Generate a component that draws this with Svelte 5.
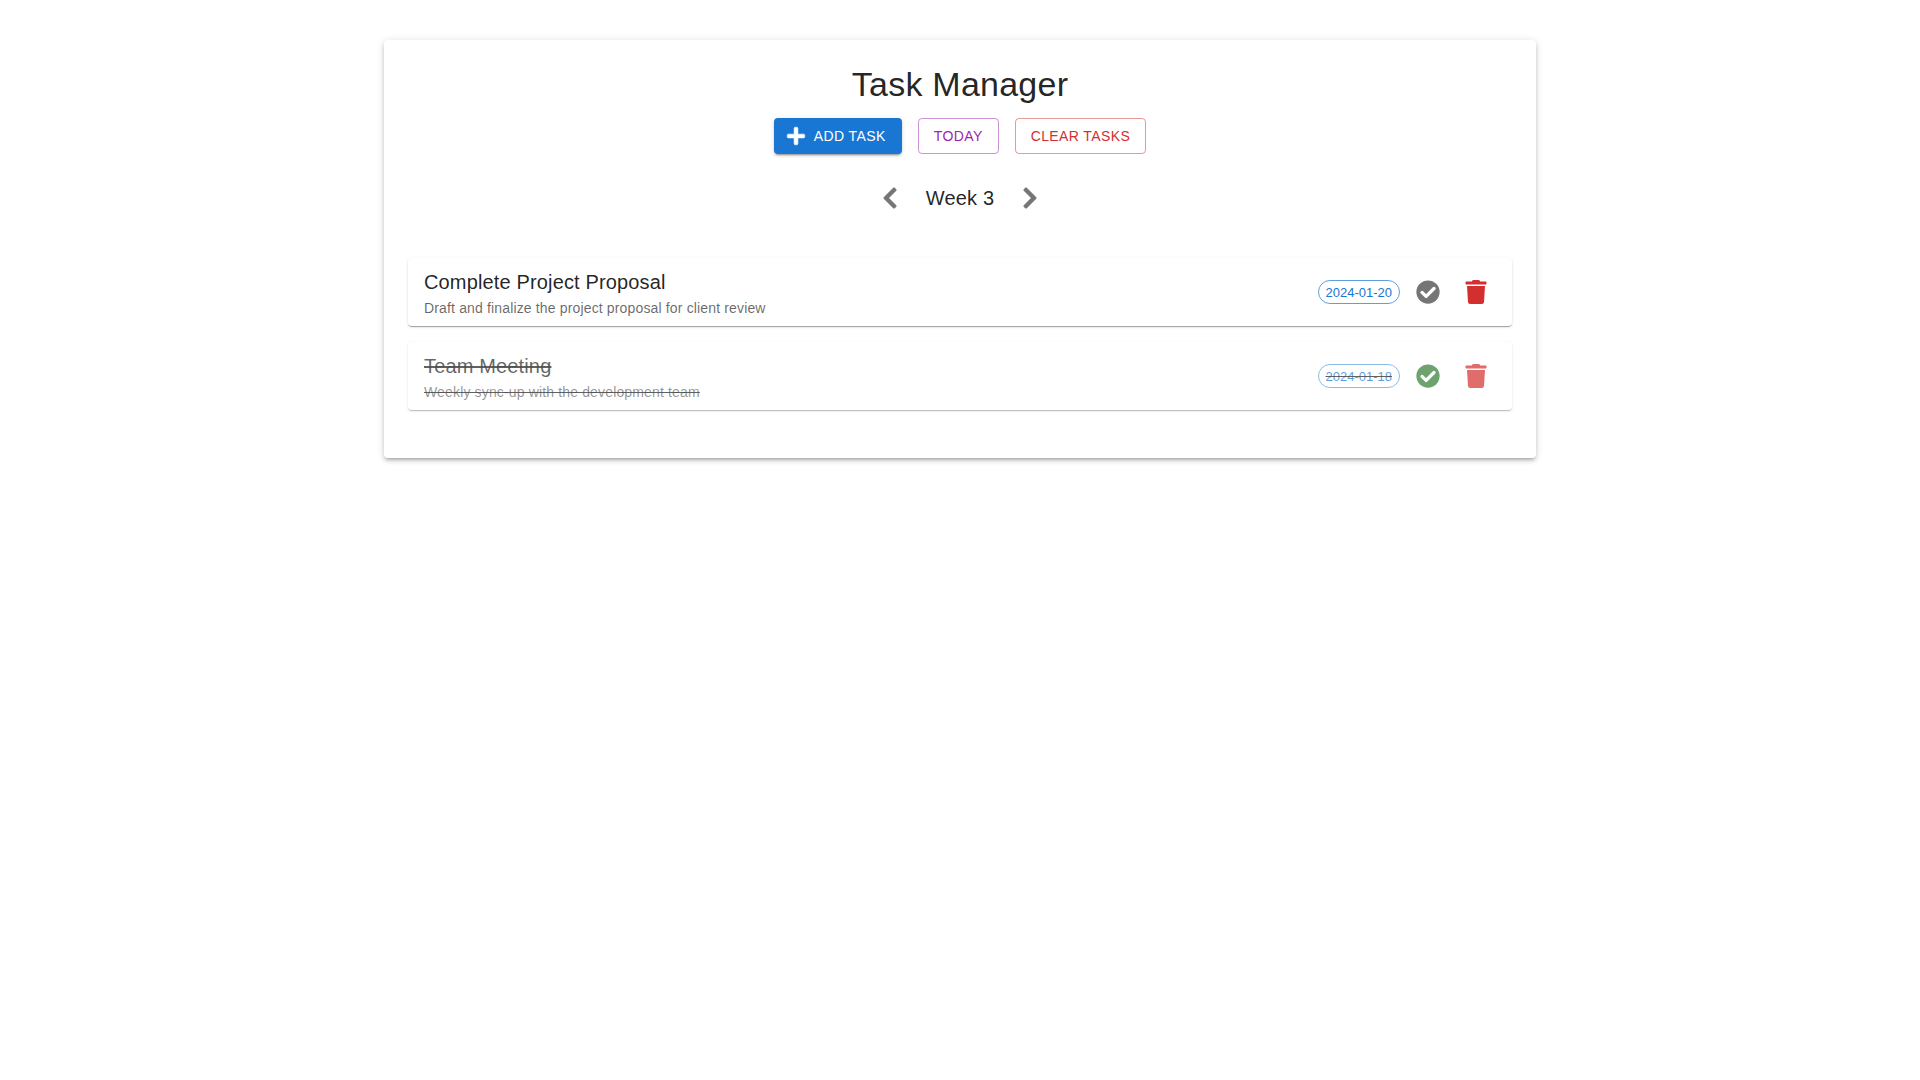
<script>
  const plus = "M416 208H272V64c0-17.67-14.33-32-32-32h-32c-17.67 0-32 14.33-32 32v144H32c-17.67 0-32 14.33-32 32v32c0 17.67 14.33 32 32 32h144v144c0 17.67 14.33 32 32 32h32c17.67 0 32-14.33 32-32V304h144c17.67 0 32-14.33 32-32v-32c0-17.67-14.33-32-32-32z";
  const left = "M34.52 239.03L228.87 44.69c9.37-9.37 24.57-9.37 33.94 0l22.67 22.67c9.36 9.36 9.37 24.52.04 33.9L131.49 256l154.02 154.75c9.34 9.38 9.32 24.54-.04 33.9l-22.67 22.67c-9.37 9.37-24.57 9.37-33.94 0L34.52 272.97c-9.37-9.37-9.37-24.57 0-33.94z";
  const right = "M285.476 272.971L91.132 467.314c-9.373 9.373-24.569 9.373-33.941 0l-22.667-22.667c-9.357-9.357-9.375-24.522-.04-33.901L188.505 256 34.484 101.255c-9.335-9.379-9.317-24.544.04-33.901l22.667-22.667c9.373-9.373 24.569-9.373 33.941 0L285.475 239.03c9.373 9.372 9.373 24.568.001 33.941z";
  const trash = "M432 32H312l-9.4-18.7A24 24 0 0 0 281.1 0H166.8a23.72 23.72 0 0 0-21.4 13.3L136 32H16A16 16 0 0 0 0 48v32a16 16 0 0 0 16 16h416a16 16 0 0 0 16-16V48a16 16 0 0 0-16-16zM53.2 467a48 48 0 0 0 47.9 45h245.8a48 48 0 0 0 47.9-45L416 128H32z";
  const tasks = [
    { title: "Complete Project Proposal", desc: "Draft and finalize the project proposal for client review", date: "2024-01-20", done: false },
    { title: "Team Meeting", desc: "Weekly sync-up with the development team", date: "2024-01-18", done: true }
  ];
</script>

<main class="page">
  <section class="card">
    <h1>Task Manager</h1>
    <div class="actions">
      <button class="btn primary">
        <svg class="plus" viewBox="0 0 448 512"><path d={plus} /></svg>
        ADD TASK
      </button>
      <button class="btn outline purple">TODAY</button>
      <button class="btn outline red">CLEAR TASKS</button>
    </div>
    <div class="week">
      <button class="icon-btn nav" aria-label="Previous week"><svg class="chev" viewBox="0 0 320 512"><path d={left} /></svg></button>
      <h2>Week 3</h2>
      <button class="icon-btn nav" aria-label="Next week"><svg class="chev" viewBox="0 0 320 512"><path d={right} /></svg></button>
    </div>
    <ul class="list">
      {#each tasks as t}
        <li class="item" class:done={t.done}>
          <div class="text">
            <div class="title">{t.title}</div>
            <div class="desc">{t.desc}</div>
          </div>
          <span class="chip">{t.date}</span>
          <button class="icon-btn status" aria-label="Toggle">
            <svg class="ic" viewBox="0 0 512 512">
              <circle cx="256" cy="256" r="248" />
              <polyline class="tick" points="128,264 216,350 384,182" />
            </svg>
          </button>
          <button class="icon-btn del" aria-label="Delete"><svg class="tr" viewBox="0 0 448 512"><path d={trash} /></svg></button>
        </li>
      {/each}
    </ul>
  </section>
</main>

<style>
  :global(body) { margin: 0; background: #fff; }
  .page { width: 1152px; min-height: 1040px; margin: 0 auto; padding-top: 40px; font-family: "Liberation Sans", Arial, sans-serif; color: rgba(0,0,0,0.87); }
  .card { background: #fff; border-radius: 4px; padding: 23px 24px 24px; height: 418px; box-sizing: border-box; display: flex; flex-direction: column;
    box-shadow: 0 3px 3px -2px rgba(0,0,0,.2), 0 3px 4px 0 rgba(0,0,0,.14), 0 1px 8px 0 rgba(0,0,0,.12); }
  h1 { margin: 0 0 13px; font-size: 34px; font-weight: 400; line-height: 42px; text-align: center; letter-spacing: .25px; }
  .actions { display: flex; justify-content: center; gap: 16px; }
  .btn { height: 36px; box-sizing: border-box; font: 400 14px/24.5px "Liberation Sans", Arial, sans-serif; letter-spacing: .4px; border-radius: 4px; background: none; display: inline-flex; align-items: center; padding: 5px 15px; cursor: pointer; }
  .primary { background: #1976d2; color: #fff; border: 0; padding: 6px 16px; box-shadow: 0 3px 1px -2px rgba(0,0,0,.2), 0 2px 2px 0 rgba(0,0,0,.14), 0 1px 5px 0 rgba(0,0,0,.12); }
  .plus { width: 18px; height: 20px; fill: #fff; stroke: #fff; stroke-width: 16; overflow: visible; margin: 0 9px 0 -3px; }
  .purple { color: #9c27b0; border: 1px solid rgba(156,39,176,.5); }
  .red { color: #d32f2f; border: 1px solid rgba(211,47,47,.5); }
  .week { display: flex; justify-content: center; align-items: center; gap: 16px; margin: 24px 0 40px; height: 40px; }
  h2 { margin: 0; font-size: 20px; font-weight: 400; line-height: 32px; letter-spacing: .15px; }
  .icon-btn { background: none; border: 0; padding: 8px; display: inline-flex; align-items: center; justify-content: center; cursor: pointer; }
  .chev { width: 24px; height: 24px; fill: #757575; stroke: #757575; stroke-width: 14; overflow: visible; }
  .list { list-style: none; margin: 0; padding: 0; display: flex; flex-direction: column; gap: 16px; }
  .item { height: 68px; box-sizing: border-box; display: flex; align-items: center; padding: 0 16px; border-radius: 4px; background: #fff;
    box-shadow: 0 2px 1px -1px rgba(0,0,0,.2), 0 1px 1px 0 rgba(0,0,0,.14), 0 1px 3px 0 rgba(0,0,0,.12); }
  .done { opacity: .7; text-decoration: line-through; }
  .text { flex: 1; padding-top: 3px; }
  .title { font-size: 20px; line-height: 26px; letter-spacing: .15px; }
  .desc { font-size: 14px; line-height: 20px; margin-top: 3px; color: rgba(0,0,0,.6); letter-spacing: .15px; }
  .chip { box-sizing: border-box; height: 24px; border: 1px solid rgba(25,118,210,.7); border-radius: 12px; color: #1976d2; font-size: 13px; line-height: 23px; padding: 0 7px; }
  .status { margin-left: 8px; }
  .ic { width: 24px; height: 24px; fill: #757575; }
  .tick { fill: none; stroke: #fff; stroke-width: 70; stroke-linejoin: round; stroke-linecap: round; }
  .done .ic { fill: #2e7d32; }
  .del { margin-left: 8px; }
  .tr { width: 24px; height: 24px; fill: #d32f2f; }
</style>
